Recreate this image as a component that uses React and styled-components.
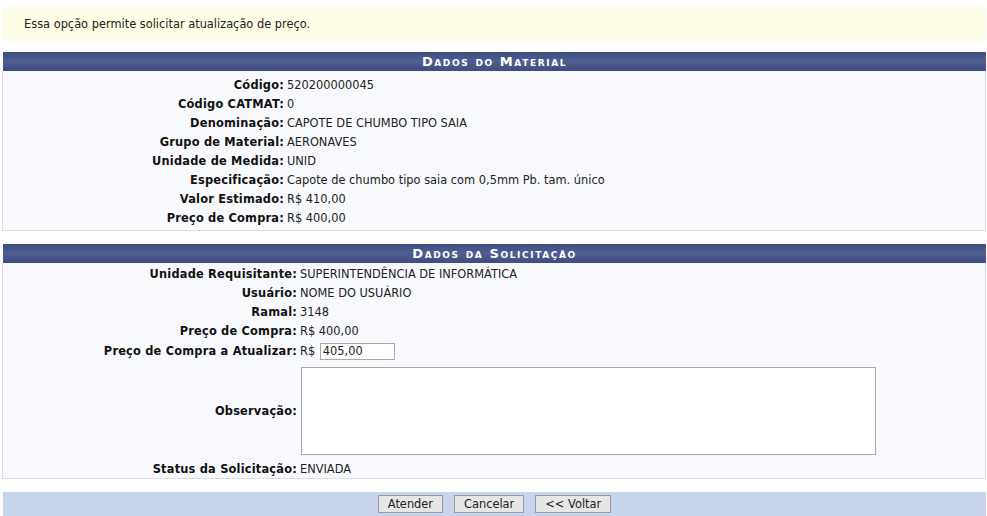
import styled, { createGlobalStyle } from "styled-components";

const GlobalStyle = createGlobalStyle`
  body {
    margin: 0;
    background: #ffffff;
    font-family: "DejaVu Sans", Verdana, sans-serif;
    font-size: 11.4px;
    color: #222222;
  }
`;

const material = [
  ["Código:", "520200000045"],
  ["Código CATMAT:", "0"],
  ["Denominação:", "CAPOTE DE CHUMBO TIPO SAIA"],
  ["Grupo de Material:", "AERONAVES"],
  ["Unidade de Medida:", "UNID"],
  ["Especificação:", "Capote de chumbo tipo saia com 0,5mm Pb. tam. único"],
  ["Valor Estimado:", "R$ 410,00"],
  ["Preço de Compra:", "R$ 400,00"],
];

const solicitacao = [
  ["Unidade Requisitante:", "SUPERINTENDÊNCIA DE INFORMÁTICA"],
  ["Usuário:", "NOME DO USUÁRIO"],
  ["Ramal:", "3148"],
  ["Preço de Compra:", "R$ 400,00"],
];

const App = () => {
  return (
    <Page>
      <GlobalStyle />
      <Info>Essa opção permite solicitar atualização de preço.</Info>

      <Table>
        <Caption>Dados do Material</Caption>
        <Body $label={284} $padTop={4} $padBottom={3}>
          {material.map(([label, value]) => (
            <Row key={label}>
              <Label>{label}</Label>
              <Value>{value}</Value>
            </Row>
          ))}
        </Body>
      </Table>

      <Table>
        <Caption>Dados da Solicitação</Caption>
        <Body $label={297} $padTop={1}>
          {solicitacao.map(([label, value]) => (
            <Row key={label}>
              <Label>{label}</Label>
              <Value>{value}</Value>
            </Row>
          ))}
          <Row $height={22}>
            <Label>Preço de Compra a Atualizar:</Label>
            <Value>
              R$ <PriceInput defaultValue="405,00" />
            </Value>
          </Row>
          <Row $height={97}>
            <Label>Observação:</Label>
            <Value>
              <Notes />
            </Value>
          </Row>
          <Row>
            <Label>Status da Solicitação:</Label>
            <Value>ENVIADA</Value>
          </Row>
        </Body>
      </Table>

      <Footer>
        <Button>Atender</Button>
        <Button>Cancelar</Button>
        <Button>&lt;&lt; Voltar</Button>
      </Footer>
    </Page>
  );
};

export default App;

const Page = styled.div`
  padding: 7px 1px 0 2px;
  display: flex;
  flex-direction: column;
`;

const Info = styled.div`
  background: #fdfde6;
  height: 34px;
  display: flex;
  align-items: center;
  padding-left: 21px;
  margin-left: 1px;
  color: #222222;
`;

const Table = styled.div`
  margin-top: 11px;
  & + & {
    margin-top: 13px;
  }
`;

const Caption = styled.div`
  height: 19px;
  margin-left: 1px;
  background: linear-gradient(#3e4c7e, #505f92 50%, #3e4c7e);
  color: #ffffff;
  font-weight: bold;
  font-variant: small-caps;
  font-size: 13px;
  letter-spacing: 1.6px;
  text-align: center;
  line-height: 19px;
`;

const Body = styled.div`
  --label: ${(p) => p.$label - 3}px;
  background: #f8f9fc;
  border: 1px solid #dcdde2;
  border-top: none;
  padding: ${(p) => p.$padTop}px 0 ${(p) => p.$padBottom || 0}px;
  display: flex;
  flex-direction: column;
`;

const Row = styled.div`
  display: grid;
  grid-template-columns: var(--label) 1fr;
  align-items: center;
  height: ${(p) => p.$height || 19}px;
`;

const Label = styled.div`
  text-align: right;
  font-weight: bold;
  letter-spacing: 0.2px;
  color: #111111;
  white-space: nowrap;
`;

const Value = styled.div`
  padding-left: 3px;
  display: flex;
  align-items: center;
  white-space: pre;
  color: #222222;
`;

const PriceInput = styled.input`
  width: 69px;
  height: 13px;
  border: 1px solid #a8a8a8;
  padding: 1px 2px;
  margin-left: 1px;
  font: inherit;
  color: #222222;
  background: #ffffff;
`;

const Notes = styled.textarea`
  width: 571px;
  height: 84px;
  border: 1px solid #a8a8a8;
  padding: 1px;
  margin: 0 0 0 1px;
  background: #ffffff;
  resize: none;
  font: inherit;
`;

const Footer = styled.div`
  margin-top: 13px;
  margin-left: 1px;
  background: #c8d4ec;
  height: 27px;
  display: flex;
  justify-content: center;
  align-items: flex-start;
  padding-top: 3px;
  box-sizing: border-box;
  gap: 11px;
`;

const Button = styled.button`
  font-family: "DejaVu Sans", Verdana, sans-serif;
  font-size: 11.4px;
  color: #222222;
  background: #e6e6e6;
  border: 1px solid #9a9a9a;
  height: 18px;
  padding: 0 9px;
  line-height: 14px;
`;
